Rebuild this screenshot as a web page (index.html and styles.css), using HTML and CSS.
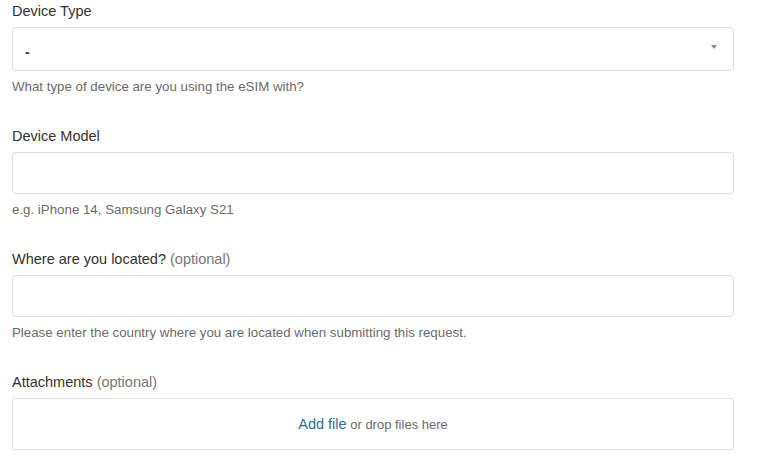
FILE: index.html
```html
<!DOCTYPE html>
<html>
<head>
<meta charset="utf-8">
<link rel="stylesheet" href="styles.css">
</head>
<body>
<form class="form">
  <div class="field">
    <label class="label">Device Type</label>
    <div class="select">
      <span class="select-value">-</span>
      <span class="caret"></span>
    </div>
    <p class="hint">What type of device are you using the eSIM with?</p>
  </div>
  <div class="field">
    <label class="label">Device Model</label>
    <div class="input"></div>
    <p class="hint">e.g. iPhone 14, Samsung Galaxy S21</p>
  </div>
  <div class="field">
    <label class="label">Where are you located? <span class="optional">(optional)</span></label>
    <div class="input"></div>
    <p class="hint">Please enter the country where you are located when submitting this request.</p>
  </div>
  <div class="field">
    <label class="label">Attachments <span class="optional">(optional)</span></label>
    <div class="dropzone"><a class="link">Add file</a>&nbsp;or drop files here</div>
  </div>
</form>
</body>
</html>
```

FILE: styles.css
```css
html, body {
  margin: 0;
  padding: 0;
  background: #fff;
}
body {
  font-family: "Liberation Sans", Arial, sans-serif;
  color: #333;
}
.form {
  width: 722px;
  padding: 1px 0 0 12px;
  display: flex;
  flex-direction: column;
  gap: 30px;
}
.field {
  display: flex;
  flex-direction: column;
}
.label {
  display: block;
  font-size: 14.5px;
  line-height: 20px;
  color: #333;
  margin-bottom: 6px;
}
.optional {
  color: #777;
}
.select, .input {
  box-sizing: border-box;
  border: 1px solid #dedede;
  border-radius: 4px;
  background: #fff;
}
.select {
  height: 44px;
  display: flex;
  align-items: center;
  justify-content: space-between;
  padding: 0 16px 0 12px;
}
.select-value {
  font-size: 14px;
  font-weight: bold;
  color: #333;
  padding-top: 6px;
}
.caret {
  width: 0;
  height: 0;
  border-left: 3px solid transparent;
  border-right: 3px solid transparent;
  border-top: 4px solid #888;
  margin-top: -4px;
}
.input {
  height: 42px;
}
.hint {
  margin: 7px 0 0;
  font-size: 13.3px;
  line-height: 18px;
  color: #6b6b6b;
}
.dropzone {
  box-sizing: border-box;
  height: 52px;
  border: 1px solid #e0e0e0;
  border-radius: 2px;
  display: flex;
  align-items: center;
  justify-content: center;
  font-size: 13px;
  color: #6b6b6b;
}
.link {
  font-size: 14.5px;
  color: #2d6f98;
}
```
